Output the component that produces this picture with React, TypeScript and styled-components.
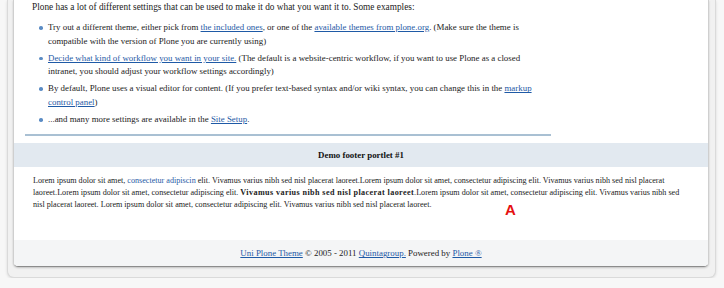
import styled, { createGlobalStyle } from "styled-components";

const GlobalStyle = createGlobalStyle`
  html, body {
    margin: 0;
    padding: 0;
    background: #f7f7f7;
  }
  body {
    font-family: "Liberation Serif", "Times New Roman", serif;
    color: #222;
  }
`;

const Frame = styled.div`
  margin: 0 8px 0 7px;
  padding: 0 6px 10px 5px;
  background: #f1f1f1;
  border: 1px solid #dadada;
  border-top: none;
  border-radius: 0 0 7px 7px;
  box-shadow: 0 1px 3px rgba(0, 0, 0, 0.12);
`;

const Card = styled.div`
  background: #fff;
  border: 1px solid #cfcfcf;
  border-top: none;
  border-bottom-color: #8c8c8c;
  border-radius: 0 0 5px 5px;
  box-shadow: 0 1px 2px rgba(0, 0, 0, 0.2);
  overflow: hidden;
`;

const Main = styled.div`
  width: 526px;
  margin-left: 11px;
  padding-bottom: 4px;
  border-bottom: 2px solid #a9c0d3;
`;

const Intro = styled.p`
  margin: 0;
  padding-left: 7px;
  font-size: 9.3px;
  line-height: 14px;
`;

const List = styled.ul`
  margin: 7px 0 0;
  padding: 0 0 0 23px;
  list-style: none;
`;

const Item = styled.li`
  position: relative;
  font-size: 8.9px;
  line-height: 13.7px;
  margin-bottom: 3.3px;

  &::before {
    content: "";
    position: absolute;
    left: -9px;
    top: 5px;
    width: 3.5px;
    height: 3.5px;
    border-radius: 50%;
    background: #5b8cc4;
  }
`;

const Link = styled.a`
  color: #1f5aa6;
  text-decoration: underline;
`;

const PlainLink = styled.a`
  color: #1f5aa6;
  text-decoration: none;
`;

const PortletHeader = styled.div`
  margin-top: 7px;
  height: 24px;
  background: #e2e9f0;
  display: flex;
  align-items: center;
  justify-content: center;
  font-size: 8.9px;
  font-weight: bold;
  color: #111;
`;

const PortletBody = styled.div`
  position: relative;
  padding: 8px 18px 0 19px;
  height: 65px;
  font-size: 8.15px;
  line-height: 12px;
`;

const Strong = styled.b`
  letter-spacing: 0.4px;
`;

const Marker = styled.span`
  position: absolute;
  left: 491px;
  top: 37px;
  font-family: "Liberation Sans", Arial, sans-serif;
  font-weight: bold;
  font-size: 15px;
  color: #e51010;
`;

const Footer = styled.div`
  height: 26px;
  background: #f4f5f6;
  display: flex;
  align-items: center;
  justify-content: center;
  font-size: 8.9px;
  color: #222;
`;

export default function App() {
  return (
    <>
      <GlobalStyle />
      <Frame>
        <Card>
          <Main>
            <Intro>
              Plone has a lot of different settings that can be used to make it do what you want it to. Some examples:
            </Intro>
            <List>
              <Item>
                Try out a different theme, either pick from <Link href="#">the included ones</Link>, or one of the{" "}
                <Link href="#">available themes from plone.org</Link>. (Make sure the theme is compatible with the
                version of Plone you are currently using)
              </Item>
              <Item>
                <Link href="#">Decide what kind of workflow you want in your site.</Link> (The default is a
                website-centric workflow, if you want to use Plone as a closed intranet, you should adjust your
                workflow settings accordingly)
              </Item>
              <Item>
                By default, Plone uses a visual editor for content. (If you prefer text-based syntax and/or wiki
                syntax, you can change this in the <Link href="#">markup control panel</Link>)
              </Item>
              <Item>
                ...and many more settings are available in the <Link href="#">Site Setup</Link>.
              </Item>
            </List>
          </Main>
          <PortletHeader>Demo footer portlet #1</PortletHeader>
          <PortletBody>
            Lorem ipsum dolor sit amet, <PlainLink href="#">consectetur adipiscin</PlainLink> elit. Vivamus varius
            nibh sed nisl placerat laoreet.Lorem ipsum dolor sit amet, consectetur adipiscing elit. Vivamus varius nibh
            sed nisl placerat laoreet.Lorem ipsum dolor sit amet, consectetur adipiscing elit.{" "}
            <Strong>Vivamus varius nibh sed nisl placerat laoreet</Strong>.Lorem ipsum dolor sit amet, consectetur
            adipiscing elit. Vivamus varius nibh sed nisl placerat laoreet. Lorem ipsum dolor sit amet, consectetur
            adipiscing elit. Vivamus varius nibh sed nisl placerat laoreet.
            <Marker>A</Marker>
          </PortletBody>
          <Footer>
            <Link href="#">Uni Plone Theme </Link>&nbsp;© 2005 - 2011&nbsp;<Link href="#">Quintagroup.</Link>
            &nbsp;Powered by&nbsp;<Link href="#">Plone ®</Link>
          </Footer>
        </Card>
      </Frame>
    </>
  );
}
